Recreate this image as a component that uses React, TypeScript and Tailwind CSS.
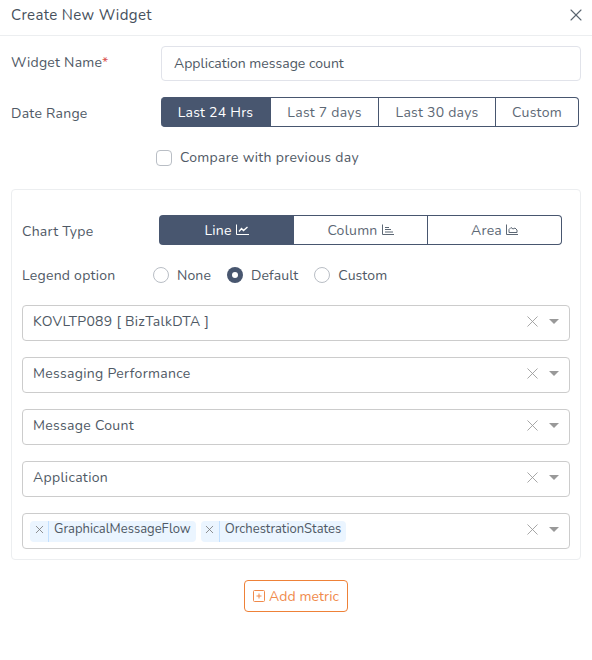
import { X } from "lucide-react";

const font = "font-['Nunito','Lato','Noto_Sans',sans-serif]";

const dateRanges = [
  { label: "Last 24 Hrs", width: "w-[110px]" },
  { label: "Last 7 days", width: "w-[108px]" },
  { label: "Last 30 days", width: "w-[117px]" },
  { label: "Custom", width: "w-[83px]" },
];

const LineIcon = () => (
  <svg width="13" height="12" viewBox="0 0 13 12" fill="none" stroke="currentColor" strokeWidth="1">
    <path d="M0.5 0.5V10.5H13" />
    <path d="M3 7.5L5.5 4.5L7.5 6.5L11.5 3" strokeWidth="1.3" />
  </svg>
);

const ColumnIcon = () => (
  <svg width="12" height="12" viewBox="0 0 12 12" fill="none" stroke="currentColor" strokeWidth="1">
    <path d="M0.5 0.5V10.5H12" />
    <path d="M3 3.5H7M3 5.5H9M3 8H11" />
  </svg>
);

const AreaIcon = () => (
  <svg width="12" height="12" viewBox="0 0 12 12" fill="none" stroke="currentColor" strokeWidth="1">
    <path d="M0.5 0.5V10.5H12" />
    <path d="M3 8.5V5.5L5 3.5L7 5L9 4L11 6V8.5Z" />
  </svg>
);

const Select = ({ children }: { children: React.ReactNode }) => (
  <div className="flex h-9 items-center rounded border border-[#ccc] bg-white pb-[3px]">
    <div className="flex min-w-0 flex-1 items-center">{children}</div>
    <X className="mr-[7px] h-[19px] w-[19px] text-[#9a9a9a]" strokeWidth={1.1} />
    <span className="mr-[10px] h-0 w-0 border-x-[5px] border-t-[5px] border-x-transparent border-t-[#999]" />
  </div>
);

const SelectText = ({ text }: { text: string }) => (
  <span className="pl-[10px] text-[14px] tracking-[0.3px] text-[#4f5965]">{text}</span>
);

const Tag = ({ text }: { text: string }) => (
  <span className="flex h-[21px] items-center rounded-sm bg-[#ebf5ff] text-[13px] tracking-normal text-[#4f5965]">
    <span className="flex h-full w-[19px] items-center justify-center border-r border-[#c2e0ff] pb-[3px] text-[#777]">
      <X className="h-[13px] w-[13px]" strokeWidth={1.5} />
    </span>
    <span className="px-[5px] pb-[3px]">{text}</span>
  </span>
);

const Radio = ({ label, checked }: { label: string; checked?: boolean }) => (
  <label className="flex items-center gap-2 tracking-[0.1px]">
    {checked ? (
      <span className="flex h-4 w-4 items-center justify-center rounded-full bg-[#48566f]">
        <span className="h-[6px] w-[6px] rounded-full bg-white" />
      </span>
    ) : (
      <span className="h-4 w-4 rounded-full border border-[#b9bec5] bg-white" />
    )}
    <span>{label}</span>
  </label>
);

export default function App() {
  return (
    <div className={`${font} h-[660px] w-[592px] bg-white text-[14px] tracking-[0.25px] text-[#4f5965]`}>
      <div className="flex h-[36px] items-center justify-between border-b border-[#eceef0] pb-[5px] pl-[11px] pr-[6px]">
        <span className="text-[15px] tracking-[0.35px] text-[#46505c]">Create New Widget</span>
        <X className="h-[20px] w-[20px] text-[#5a6570]" strokeWidth={1.3} />
      </div>

      <div className="flex items-center pl-[11px] pr-[11px] pt-[10px]">
        <label className="w-[150px] -translate-y-[1px]">
          Widget Name<span className="text-[#d9534f]">*</span>
        </label>
        <div className="flex h-[35px] flex-1 items-center rounded-sm border border-[#e1e3ea] pl-[12px] tracking-normal">
          Application message count
        </div>
      </div>

      <div className="mt-[16px] flex items-center pl-[11px]">
        <label className="w-[150px] translate-y-[1px]">Date Range</label>
        <div className="flex h-[30px] w-[418px]">
          {dateRanges.map((r, i) => (
            <div
              key={r.label}
              className={`flex items-center justify-center border-y border-r border-[#48566f] ${r.width} ${
                i === 0 ? "rounded-l bg-[#48566f] text-white" : "text-[#5d6875]"
              } ${i === 3 ? "rounded-r" : ""}`}
            >
              {r.label}
            </div>
          ))}
        </div>
      </div>

      <label className="mt-[20px] flex items-center gap-2 pl-[156px] tracking-[0.3px]">
        <span className="h-4 w-4 rounded-sm border border-[#b9bec5]" />
        Compare with previous day
      </label>

      <div className="mx-[11px] mt-[21px] h-[371px] rounded border border-[#eceef0] px-[10px] pt-[25px]">
        <div className="flex items-center">
          <label className="w-[137px] translate-y-[1px]">Chart Type</label>
          <div className="flex h-[30px] w-[403px]">
            <div className="flex w-[135px] items-center justify-center gap-[4px] rounded-l bg-[#48566f] text-white">
              Line <LineIcon />
            </div>
            <div className="flex w-[134px] items-center justify-center gap-[4px] border-y border-r border-[#48566f] text-[#5d6875]">
              Column <ColumnIcon />
            </div>
            <div className="flex w-[134px] items-center justify-center gap-[4px] rounded-r border-y border-r border-[#48566f] text-[#5d6875]">
              Area <AreaIcon />
            </div>
          </div>
        </div>

        <div className="mt-[20px] flex h-[20px] items-center">
          <label className="w-[131px]">Legend option</label>
          <div className="flex gap-[16px]">
            <Radio label="None" />
            <Radio label="Default" checked />
            <Radio label="Custom" />
          </div>
        </div>

        <div className="mt-[20px] flex flex-col gap-4">
          <Select>
            <SelectText text="KOVLTP089 [ BizTalkDTA ]" />
          </Select>
          <Select>
            <SelectText text="Messaging Performance" />
          </Select>
          <Select>
            <SelectText text="Message Count" />
          </Select>
          <Select>
            <SelectText text="Application" />
          </Select>
          <Select>
            <div className="flex gap-[5px] pl-[7px] pt-[3px]">
              <Tag text="GraphicalMessageFlow" />
              <Tag text="OrchestrationStates" />
            </div>
          </Select>
        </div>
      </div>

      <div className="mt-[20px] flex justify-center">
        <button className="flex h-[32px] w-[104px] items-center justify-center gap-[4px] rounded-sm border border-[#ee8138] tracking-[0.1px] text-[#f08a4b]">
          <svg width="12" height="12" viewBox="0 0 12 12" fill="none" stroke="currentColor" strokeWidth="1">
            <rect x="0.5" y="0.5" width="11" height="11" rx="1" />
            <path d="M6 3.5V8.5M3.5 6H8.5" />
          </svg>
          Add metric
        </button>
      </div>
    </div>
  );
}
